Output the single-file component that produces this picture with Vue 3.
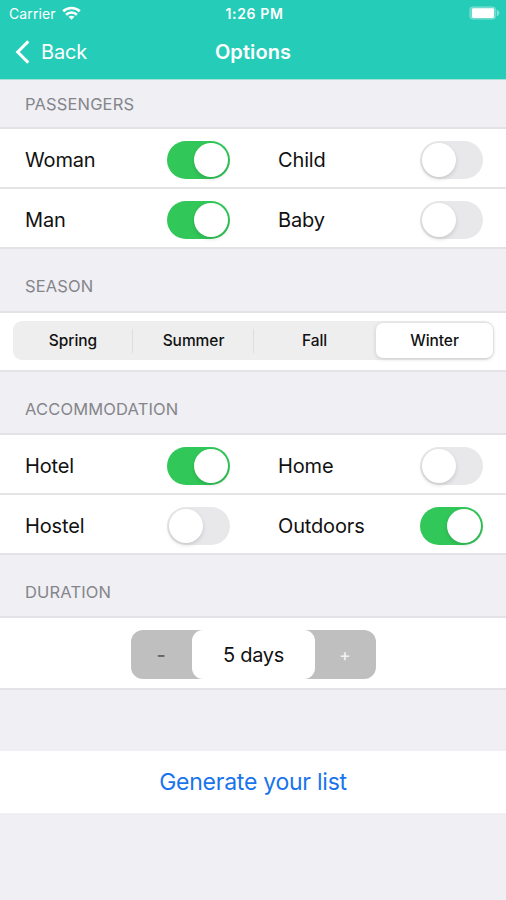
<script setup>
import { ref, reactive } from 'vue'

const passengers = reactive([
  { label: 'Woman', on: true },
  { label: 'Child', on: false },
  { label: 'Man', on: true },
  { label: 'Baby', on: false },
])
const places = reactive([
  { label: 'Hotel', on: true },
  { label: 'Home', on: false },
  { label: 'Hostel', on: false },
  { label: 'Outdoors', on: true },
])
const seasons = ['Spring', 'Summer', 'Fall', 'Winter']
const season = ref('Winter')
const days = ref(5)
</script>

<template>
  <main class="screen">
    <header class="top">
      <div class="status">
        <div class="carrier">
          <span>Carrier</span>
          <svg class="wifi" width="19" height="14" viewBox="0 0 19 14" fill="none" stroke="#fff" stroke-width="2.6">
            <path d="M1.200 5.300C5.900.8 13.100.8 17.800 5.300" />
            <path d="M4.100 8.700c3-2.900 7.800-2.900 10.800 0" />
            <path d="M9.500 13.700 6.500 10.800c1.700-1.500 4.300-1.500 6 0Z" fill="#fff" stroke="none" />
          </svg>
        </div>
        <span class="clock">1:26 PM</span>
        <svg class="battery" width="31" height="14" viewBox="0 0 31 14">
          <rect x=".7" y=".7" width="26" height="12.600" rx="3.200" fill="#fff" fill-opacity=".3" stroke="#fff" stroke-opacity=".2" />
          <rect x="3" y="2.300" width="22" height="9.600" rx="1.400" fill="#fff" />
          <path d="M27.800 3.500v7c3.400-2.200 3.400-4.800 0-7Z" fill="#fff" fill-opacity=".42" />
        </svg>
      </div>
      <nav class="nav">
        <button class="back">
          <svg width="15" height="24" viewBox="0 0 15 24" fill="none" stroke="#fff" stroke-width="3">
            <path d="M13.300 1.400 2.700 12l10.600 10.600" />
          </svg>
          <span>Back</span>
        </button>
        <h1>Options</h1>
      </nav>
    </header>

    <h2 class="first">PASSENGERS</h2>
    <section class="switches">
      <div v-for="item in passengers" :key="item.label" class="cell">
        <span>{{ item.label }}</span>
        <button class="toggle" :class="{ on: item.on }" :aria-label="item.label" @click="item.on = !item.on"><i /></button>
      </div>
    </section>

    <h2 class="tall">SEASON</h2>
    <section class="season">
      <div class="segments">
        <button v-for="s in seasons" :key="s" :class="{ active: s === season }" @click="season = s">{{ s }}</button>
      </div>
    </section>

    <h2>ACCOMMODATION</h2>
    <section class="switches">
      <div v-for="item in places" :key="item.label" class="cell">
        <span>{{ item.label }}</span>
        <button class="toggle" :class="{ on: item.on }" :aria-label="item.label" @click="item.on = !item.on"><i /></button>
      </div>
    </section>

    <h2>DURATION</h2>
    <section class="duration">
      <div class="stepper">
        <button class="minus" @click="days--">-</button>
        <output>{{ days }} days</output>
        <button class="plus" @click="days++">+</button>
      </div>
    </section>

    <button class="generate"><span>Generate your list</span></button>
  </main>
</template>

<style>
body {
  background: #efeff4;
}
</style>

<style scoped>
.screen {
  display: flex;
  flex-direction: column;
  width: 506px;
  height: 900px;
  overflow: hidden;
  background: #efeff4;
  color: #111;
  font-family: Inter, 'Liberation Sans', sans-serif;
}
button {
  margin: 0;
  padding: 0;
  border: 0;
  background: none;
  color: inherit;
  font: inherit;
  letter-spacing: inherit;
}
.top {
  height: 80px;
  flex: none;
  background: #25ccb8;
  color: #fff;
  border-bottom: 1px solid #a5e2dc;
  box-sizing: border-box;
}
.status {
  display: grid;
  grid-template-columns: 1fr auto 1fr;
  align-items: center;
  height: 26px;
  padding: 0 6px 0 9px;
  font-size: 14px;
}
.carrier {
  display: flex;
  align-items: center;
  gap: 6px;
  letter-spacing: 0.1px;
}
.clock {
  font-weight: 600;
  letter-spacing: 0.65px;
}
.battery {
  justify-self: end;
}
.nav {
  display: grid;
  grid-template-columns: 1fr auto 1fr;
  align-items: center;
  height: 52px;
  padding: 0 15px;
}
.back {
  display: flex;
  align-items: center;
  gap: 11px;
  font-size: 20px;
  letter-spacing: -0.2px;
}
h1 {
  margin: 0;
  font-size: 20px;
  font-weight: 600;
  letter-spacing: 0.1px;
}
h2 {
  display: flex;
  align-items: center;
  flex: none;
  height: 61px;
  margin: 0;
  padding: 12px 25px 0;
  box-sizing: border-box;
  color: #85858a;
  font-size: 16.5px;
  font-weight: 400;
  letter-spacing: 0.15px;
}
h2.first {
  height: 47px;
  padding-top: 0;
}
h2.tall {
  height: 62px;
}
section {
  flex: none;
  box-sizing: border-box;
  background: #fff;
  border-top: 2px solid #e3e3e7;
  border-bottom: 2px solid #e3e3e7;
}
.switches {
  display: grid;
  grid-template-columns: 1fr 1fr;
  grid-template-rows: 60px 58px;
  height: 122px;
}
.cell {
  display: flex;
  align-items: center;
  justify-content: space-between;
  padding: 3px 23px 0 25px;
  font-size: 20px;
  letter-spacing: -0.15px;
}
.cell:nth-child(-n + 2) {
  border-bottom: 2px solid #e5e5e8;
}
.toggle {
  width: 63px;
  height: 38px;
  padding: 2px;
  border-radius: 19px;
  background: #e8e8ea;
  display: flex;
}
.toggle i {
  width: 34px;
  height: 34px;
  border-radius: 50%;
  background: #fff;
  box-shadow: 0 2px 4px rgba(0, 0, 0, 0.14);
}
.toggle.on {
  justify-content: flex-end;
  background: #32c759;
}
.season {
  height: 61px;
  padding: 8px 12px 0 13px;
}
.segments {
  display: grid;
  grid-template-columns: 120px 121px 121px 1fr;
  height: 39px;
  padding-right: 1px;
  border-radius: 9px;
  background: #eee;
  font-size: 15.5px;
  font-weight: 500;
  letter-spacing: -0.05px;
}
.segments button {
  display: flex;
  align-items: center;
  justify-content: center;
}
.segments button:nth-child(-n + 2) {
  background: linear-gradient(#dedede, #dedede) right center / 1px 24px no-repeat;
}
.segments .active {
  margin: 2px 0 2px 1px;
  border-radius: 7px;
  background: #fff;
  box-shadow: 0 1px 4px rgba(0, 0, 0, 0.16);
}
.duration {
  display: flex;
  justify-content: center;
  height: 74px;
  padding-top: 12px;
}
.stepper {
  display: grid;
  grid-template-columns: 61px 123px 61px;
  height: 49px;
  border-radius: 12px;
  background: #bfbfbf;
  overflow: hidden;
  font-size: 20px;
}
.stepper output {
  display: flex;
  align-items: center;
  justify-content: center;
  padding-left: 1px;
  border-radius: 11px;
  background: #fff;
  letter-spacing: -0.3px;
}
.minus {
  color: #666;
  font-weight: 500;
}
.plus {
  color: #f2f2f2;
  font-size: 17px;
  font-weight: 500;
}
.generate {
  flex: none;
  height: 62px;
  margin-top: 61px;
  background: #fff;
  color: #1974ec;
  font-size: 23px;
  letter-spacing: -0.25px;
}
</style>
